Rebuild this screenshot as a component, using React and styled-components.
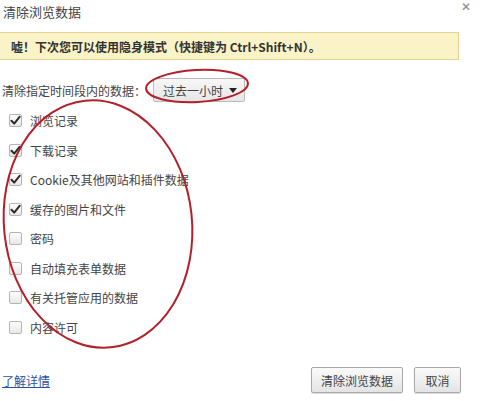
import React from "react";
import styled, { createGlobalStyle } from "styled-components";

const Global = createGlobalStyle`
  html, body { margin: 0; padding: 0; background: #fff; }
  body { font-family: "Noto Sans CJK SC", "Noto Sans", sans-serif; color: #333; }
`;

const Dialog = styled.div`
  position: relative;
  width: 480px;
  height: 401px;
  display: flex;
  flex-direction: column;
  overflow: hidden;
  background: #fff;
`;

const Header = styled.div`
  display: flex;
  justify-content: space-between;
  align-items: flex-start;
  height: 26px;
  padding: 0 9px 0 3px;
`;

const Title = styled.div`
  font-size: 13px;
  line-height: 26px;
  color: #444;
  margin-top: -1px;
`;

const Close = styled.div`
  font-family: "DejaVu Sans", sans-serif;
  font-size: 12px;
  line-height: 12px;
  padding-top: 1px;
  color: #888;
`;

const Banner = styled.div`
  margin: 6px 21px 0 -1px;
  height: 26px;
  border: 1px solid #e3d594;
  background: #fbf3c8;
  display: flex;
  align-items: center;
  padding-left: 11px;
  font-size: 12px;
  font-weight: bold;
  color: #333;
`;

const TimeRow = styled.div`
  display: flex;
  align-items: center;
  margin-top: 17px;
  height: 26px;
  padding-left: 2px;
  font-size: 12px;
  color: #444;
`;

const Select = styled.div`
  display: flex;
  align-items: center;
  justify-content: space-between;
  box-sizing: border-box;
  width: 92px;
  height: 24px;
  margin-left: 7px;
  padding: 0 7px 0 9px;
  border: 1px solid #b9b9b9;
  border-radius: 2px;
  background: linear-gradient(#f7f7f7, #e6e6e6);
  font-size: 12px;
  color: #444;
`;

const Arrow = styled.span`
  width: 0;
  height: 0;
  border-left: 4px solid transparent;
  border-right: 4px solid transparent;
  border-top: 5px solid #222;
`;

const List = styled.div`
  display: flex;
  flex-direction: column;
  margin-top: 3px;
`;

const Row = styled.label`
  display: flex;
  align-items: center;
  height: 29.5px;
  padding-left: 9px;
  font-size: 12px;
  color: #444;
`;

const Box = styled.span`
  box-sizing: border-box;
  width: 13px;
  height: 13px;
  margin-right: 8px;
  border: 1px solid #b4b4b4;
  border-radius: 2px;
  background: linear-gradient(#fdfdfd, #e8e8e8);
  display: flex;
  align-items: center;
  justify-content: center;
`;

const Footer = styled.div`
  margin-top: auto;
  display: flex;
  align-items: center;
  height: 26px;
  margin-bottom: 8px;
  padding: 0 19px 0 2px;
`;

const Link = styled.a`
  font-size: 12px;
  color: #2a52a6;
  text-decoration: underline;
  margin-right: auto;
`;

const Button = styled.button`
  box-sizing: border-box;
  height: 26px;
  min-width: ${(p) => p.$w}px;
  margin-left: 11px;
  border: 1px solid #a9a9a9;
  border-radius: 2px;
  background: linear-gradient(#fafafa, #e4e4e4);
  box-shadow: 0 1px 1px rgba(0,0,0,0.15);
  font-family: "Noto Sans CJK SC", sans-serif;
  font-size: 12px;
  color: #444;
  padding: 0;
`;

const Overlay = styled.svg`
  position: absolute;
  left: 0;
  top: 0;
  pointer-events: none;
`;

const Check = () => (
  <svg width="11" height="11" viewBox="0 0 11 11">
    <path d="M1.5 5.8 L4.2 8.6 L9.6 1.8" fill="none" stroke="#2b2b2b" strokeWidth="2" strokeLinecap="round" strokeLinejoin="round" />
  </svg>
);

const items = [
  ["浏览记录", true],
  ["下载记录", true],
  ["Cookie及其他网站和插件数据", true],
  ["缓存的图片和文件", true],
  ["密码", false],
  ["自动填充表单数据", false],
  ["有关托管应用的数据", false],
  ["内容许可", false],
];

export default function App() {
  return (
    <>
      <Global />
      <Dialog>
        <Header>
          <Title>清除浏览数据</Title>
          <Close>✕</Close>
        </Header>
        <Banner>嘘！下次您可以使用隐身模式（快捷键为 Ctrl+Shift+N）。</Banner>
        <TimeRow>
          清除指定时间段内的数据：
          <Select>
            过去一小时
            <Arrow />
          </Select>
        </TimeRow>
        <List>
          {items.map(([label, checked]) => (
            <Row key={label}>
              <Box>{checked && <Check />}</Box>
              {label}
            </Row>
          ))}
        </List>
        <Footer>
          <Link href="#">了解详情</Link>
          <Button $w={92}>清除浏览数据</Button>
          <Button $w={47}>取消</Button>
        </Footer>
        <Overlay width="480" height="401" viewBox="0 0 480 401">
          <ellipse cx="197" cy="86" rx="51" ry="16" transform="rotate(-3 197 86)" fill="none" stroke="#b3202a" strokeWidth="2" />
          <ellipse cx="98" cy="224" rx="94" ry="124" transform="rotate(-6 98 224)" fill="none" stroke="#b3202a" strokeWidth="2" />
        </Overlay>
      </Dialog>
    </>
  );
}
